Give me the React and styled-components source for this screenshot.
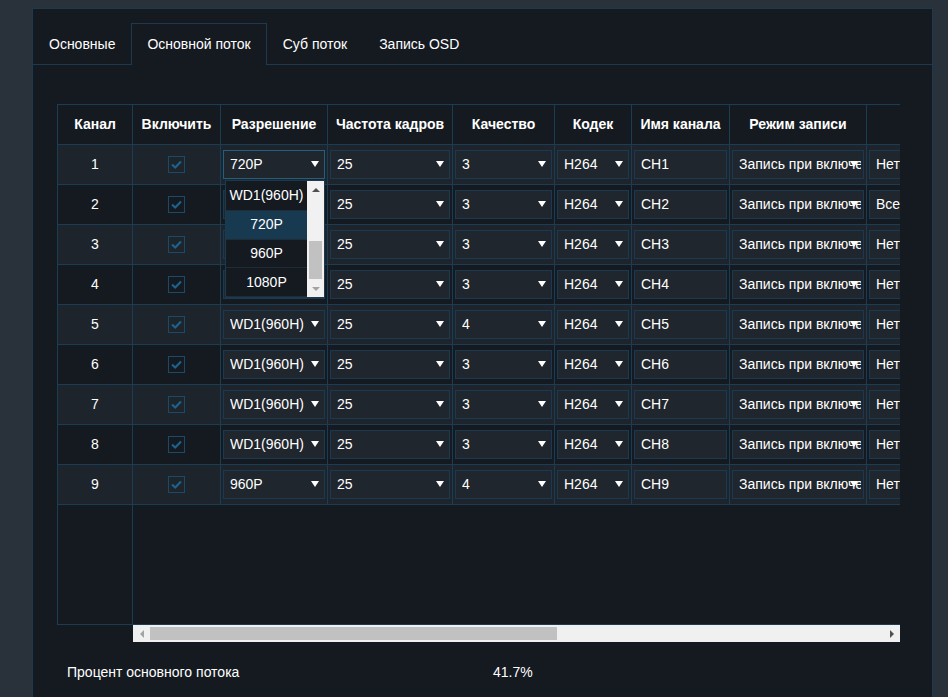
import React from 'react'
import styled, { createGlobalStyle, css } from 'styled-components'

const GlobalStyle = createGlobalStyle`
  html, body {
    margin: 0;
    padding: 0;
    background: #29313a;
    font-family: "Liberation Sans", Arial, sans-serif;
    font-size: 14px;
    color: #ffffff;
    overflow: hidden;
  }
`

const Page = styled.div`
  padding: 8px 15px 0 32px;
  height: 697px;
  box-sizing: border-box;
`

const Panel = styled.div`
  width: 901px;
  height: 720px;
  box-sizing: border-box;
  background: #151a21;
  border: 1px solid #1b3a4f;
`

const TabBar = styled.div`
  display: flex;
  align-items: flex-end;
  height: 56px;
  box-sizing: border-box;
  border-bottom: 1px solid #1b3a4f;
`

const Tab = styled.div`
  height: 41px;
  box-sizing: border-box;
  padding: 0 15px 2px;
  display: flex;
  align-items: center;
  margin-bottom: -1px;
  border: 1px solid transparent;
  border-bottom: none;
  color: #fff;
  ${({ $active }) => $active && css`
    border-color: #1b3a4f;
    background: #151a21;
    height: 42px;
  `}
`

const Content = styled.div`
  padding: 39px 0 0 24px;
`

const TableArea = styled.div`
  display: flex;
`

const FixedCol = styled.div`
  width: 76px;
  height: 521px;
  box-sizing: border-box;
  border: 1px solid #1b3d54;
  display: flex;
  flex-direction: column;
`

const ScrollArea = styled.div`
  width: 767px;
  display: flex;
  flex-direction: column;
`

const ScrollView = styled.div`
  height: 521px;
  box-sizing: border-box;
  border-top: 1px solid #1b3d54;
  border-bottom: 1px solid #1b3d54;
  overflow: hidden;
`

const Row = styled.div`
  display: flex;
  height: 40px;
  box-sizing: border-box;
  border-bottom: 1px solid #1b3d54;
  background: ${({ $alt }) => ($alt ? '#1e242b' : '#151a21')};
  width: max-content;
  min-width: 100%;
`

const HeadCell = styled.div`
  width: ${({ $w }) => $w}px;
  flex: none;
  box-sizing: border-box;
  border-right: 1px solid #1b3d54;
  display: flex;
  align-items: center;
  justify-content: center;
  padding-bottom: 2px;
  font-weight: bold;
  white-space: nowrap;
`

const Cell = styled.div`
  width: ${({ $w }) => $w}px;
  flex: none;
  box-sizing: border-box;
  border-right: ${({ $last }) => ($last ? 'none' : '1px solid #1b3d54')};
  display: flex;
  align-items: center;
  justify-content: ${({ $center }) => ($center ? 'center' : 'stretch')};
  padding: ${({ $center }) => ($center ? '0' : '0 2px')};
`

const FixedCell = styled.div`
  height: 40px;
  flex: none;
  box-sizing: border-box;
  border-bottom: 1px solid #1b3d54;
  display: flex;
  align-items: center;
  justify-content: center;
  padding-bottom: 2px;
  background: ${({ $alt }) => ($alt ? '#1e242b' : '#151a21')};
  font-weight: ${({ $head }) => ($head ? 'bold' : 'normal')};
`

const Select = styled.div`
  position: relative;
  flex: 1;
  min-width: 0;
  height: 29px;
  box-sizing: border-box;
  background: #1f262d;
  border: 1px solid ${({ $focus }) => ($focus ? '#22607f' : '#1c3a4f')};
  display: flex;
  align-items: center;
  padding: 0 2px 2px 6px;
  white-space: nowrap;
  overflow: visible;
`

const SelectText = styled.span`
  overflow: hidden;
  flex: 1;
  min-width: 0;
`

const Caret = styled.span`
  position: absolute;
  right: 5px;
  top: 10px;
  width: 0;
  height: 0;
  border-left: 4px solid transparent;
  border-right: 4px solid transparent;
  border-top: 6px solid #ffffff;
`

const Dropdown = styled.div`
  position: absolute;
  top: 29px;
  left: 1px;
  width: 100px;
  height: 118px;
  box-sizing: border-box;
  border: 1px solid #1b3a4f;
  background: #151a21;
  display: flex;
  z-index: 5;
`

const OptionList = styled.div`
  flex: 1;
  display: flex;
  flex-direction: column;
  padding-top: 1px;
`

const Option = styled.div`
  height: 29px;
  box-sizing: border-box;
  display: flex;
  align-items: center;
  justify-content: center;
  padding-bottom: 1px;
  border-bottom: 1px solid #1f2d39;
  background: ${({ $sel }) => ($sel ? '#173a51' : '#151a21')};
`

const VBar = styled.div`
  width: 17px;
  background: #f1f1f1;
  display: flex;
  flex-direction: column;
  align-items: center;
`

const VThumb = styled.div`
  width: 13px;
  height: 38px;
  margin-top: 43px;
  background: #c1c1c1;
`

const Arrow = styled.span`
  width: 0;
  height: 0;
  ${({ $dir, $color }) => $dir === 'up' && css`
    border-left: 4px solid transparent;
    border-right: 4px solid transparent;
    border-bottom: 4px solid ${$color};
  `}
  ${({ $dir, $color }) => $dir === 'down' && css`
    border-left: 4px solid transparent;
    border-right: 4px solid transparent;
    border-top: 4px solid ${$color};
  `}
  ${({ $dir, $color }) => $dir === 'left' && css`
    border-top: 4px solid transparent;
    border-bottom: 4px solid transparent;
    border-right: 4px solid ${$color};
  `}
  ${({ $dir, $color }) => $dir === 'right' && css`
    border-top: 4px solid transparent;
    border-bottom: 4px solid transparent;
    border-left: 4px solid ${$color};
  `}
`

const ArrowBox = styled.div`
  width: 17px;
  height: ${({ $h }) => $h || 17}px;
  flex: none;
  display: flex;
  align-items: center;
  justify-content: center;
`

const HBar = styled.div`
  height: 17px;
  background: #f0f0f0;
  display: flex;
  align-items: center;
`

const HThumb = styled.div`
  width: 407px;
  height: 13px;
  background: #c1c1c1;
`

const Footer = styled.div`
  display: flex;
  align-items: center;
  height: 60px;
  padding-left: 10px;
`

const FooterLabel = styled.div`
  width: 426px;
`

const cols = [
  { key: 'en', title: 'Включить', w: 88 },
  { key: 'res', title: 'Разрешение', w: 107 },
  { key: 'fps', title: 'Частота кадров', w: 125 },
  { key: 'q', title: 'Качество', w: 102 },
  { key: 'codec', title: 'Кодек', w: 77 },
  { key: 'name', title: 'Имя канала', w: 98 },
  { key: 'mode', title: 'Режим записи', w: 137 },
  { key: 'ev', title: '', w: 140 },
]

const rows = [
  { res: '720P', q: '3', ev: 'Нет' },
  { res: 'WD1(960H)', q: '3', ev: 'Все' },
  { res: 'WD1(960H)', q: '3', ev: 'Нет' },
  { res: 'WD1(960H)', q: '3', ev: 'Нет' },
  { res: 'WD1(960H)', q: '4', ev: 'Нет' },
  { res: 'WD1(960H)', q: '3', ev: 'Нет' },
  { res: 'WD1(960H)', q: '3', ev: 'Нет' },
  { res: 'WD1(960H)', q: '3', ev: 'Нет' },
  { res: '960P', q: '4', ev: 'Нет' },
]

function Check() {
  return (
    <svg width="17" height="17" viewBox="0 0 17 17">
      <rect x="0.5" y="0.5" width="16" height="16" fill="none" stroke="#1b4966" />
      <polyline points="4,8.5 7.2,11.5 13,5.5" fill="none" stroke="#1d6390" strokeWidth="2" />
    </svg>
  )
}

function ResDropdown() {
  return (
    <Dropdown>
      <OptionList>
        <Option>WD1(960H)</Option>
        <Option $sel>720P</Option>
        <Option>960P</Option>
        <Option>1080P</Option>
      </OptionList>
      <VBar>
        <ArrowBox $h={17}><Arrow $dir="up" $color="#505050" /></ArrowBox>
        <VThumb />
        <div style={{ flex: 1 }} />
        <ArrowBox $h={17}><Arrow $dir="down" $color="#a3a3a3" /></ArrowBox>
      </VBar>
    </Dropdown>
  )
}

function App() {
  return (
    <Page>
      <GlobalStyle />
      <Panel>
        <TabBar>
          <Tab>Основные</Tab>
          <Tab $active>Основной поток</Tab>
          <Tab>Суб поток</Tab>
          <Tab>Запись OSD</Tab>
        </TabBar>
        <Content>
          <TableArea>
            <FixedCol>
              <FixedCell $head>Канал</FixedCell>
              {rows.map((r, i) => (
                <FixedCell key={i} $alt={i % 2 === 0}>{i + 1}</FixedCell>
              ))}
            </FixedCol>
            <ScrollArea>
              <ScrollView>
                <Row>
                  {cols.map((c) => (
                    <HeadCell key={c.key} $w={c.w}>{c.title}</HeadCell>
                  ))}
                </Row>
                {rows.map((r, i) => (
                  <Row key={i} $alt={i % 2 === 0}>
                    <Cell $w={88} $center><Check /></Cell>
                    <Cell $w={107}>
                      <Select $focus={i === 0}>
                        <SelectText>{r.res}</SelectText>
                        <Caret />
                        {i === 0 && <ResDropdown />}
                      </Select>
                    </Cell>
                    <Cell $w={125}>
                      <Select><SelectText>25</SelectText><Caret /></Select>
                    </Cell>
                    <Cell $w={102}>
                      <Select><SelectText>{r.q}</SelectText><Caret /></Select>
                    </Cell>
                    <Cell $w={77}>
                      <Select><SelectText>H264</SelectText><Caret /></Select>
                    </Cell>
                    <Cell $w={98}>
                      <Select><SelectText>CH{i + 1}</SelectText></Select>
                    </Cell>
                    <Cell $w={137}>
                      <Select><SelectText>Запись при включении</SelectText><Caret /></Select>
                    </Cell>
                    <Cell $w={140} $last>
                      <Select><SelectText>{r.ev}</SelectText><Caret /></Select>
                    </Cell>
                  </Row>
                ))}
              </ScrollView>
              <HBar>
                <ArrowBox><Arrow $dir="left" $color="#a3a3a3" /></ArrowBox>
                <HThumb />
                <div style={{ flex: 1 }} />
                <ArrowBox><Arrow $dir="right" $color="#505050" /></ArrowBox>
              </HBar>
            </ScrollArea>
          </TableArea>
          <Footer>
            <FooterLabel>Процент основного потока</FooterLabel>
            <div>41.7%</div>
          </Footer>
        </Content>
      </Panel>
    </Page>
  )
}

export default App
